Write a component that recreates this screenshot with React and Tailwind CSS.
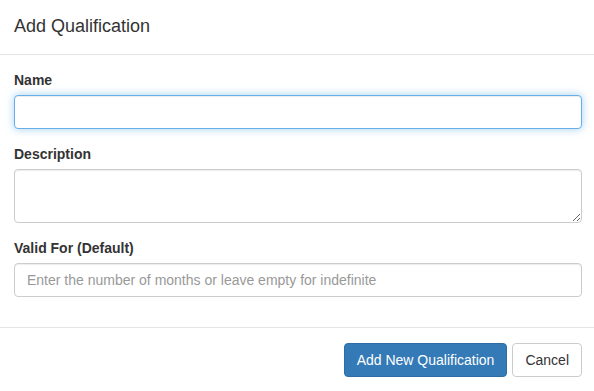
import { useEffect, useRef } from 'react'

// ─── Form field ─────────────────────────────────────────
function Field({ label, children }) {
  return (
    <div className="mb-[15px]">
      <label className="mb-[5px] block text-[14px] font-bold leading-5 text-[#333]">{label}</label>
      {children}
    </div>
  )
}

const inputBase =
  'block w-full rounded-[4px] border border-[#ccc] bg-white px-3 py-[6px] text-[14px] leading-5 text-[#555] shadow-[inset_0_1px_1px_rgba(0,0,0,0.075)] outline-none placeholder:text-[#999]'

export default function App() {
  const nameRef = useRef(null)

  useEffect(() => {
    nameRef.current?.focus()
  }, [])

  return (
    <div className="h-[391px] w-[594px] overflow-hidden bg-white font-['Liberation_Sans',Arial,sans-serif] text-[#333]">
      {/* header */}
      <div className="h-[55px] border-b border-[#e5e5e5] pl-[14px] pr-[12px] pt-[14px]">
        <h4 className="text-[18px] font-normal leading-6 text-[#333]">Add Qualification</h4>
      </div>

      {/* body */}
      <div className="pb-[15px] pl-[14px] pr-[12px] pt-[15px]">
        <Field label="Name">
          <input
            ref={nameRef}
            type="text"
            className={`${inputBase} h-[34px] focus:border-[#66afe9] focus:shadow-[inset_0_1px_1px_rgba(0,0,0,0.075),0_0_8px_rgba(102,175,233,0.6)]`}
          />
        </Field>
        <Field label="Description">
          <textarea rows={2} className={`${inputBase} h-[54px] resize-y`} />
        </Field>
        <Field label="Valid For (Default)">
          <input
            type="text"
            placeholder="Enter the number of months or leave empty for indefinite"
            className={`${inputBase} h-[34px]`}
          />
        </Field>
      </div>

      {/* footer */}
      <div className="flex justify-end gap-[5px] border-t border-[#e5e5e5] pl-[14px] pr-[12px] pt-[15px]">
        <button className="h-[34px] rounded-[4px] border border-[#2e6da4] bg-[#337ab7] px-3 text-[14px] leading-5 text-white">
          Add New Qualification
        </button>
        <button className="h-[34px] rounded-[4px] border border-[#ccc] bg-white px-3 text-[14px] leading-5 text-[#333]">
          Cancel
        </button>
      </div>
    </div>
  )
}
